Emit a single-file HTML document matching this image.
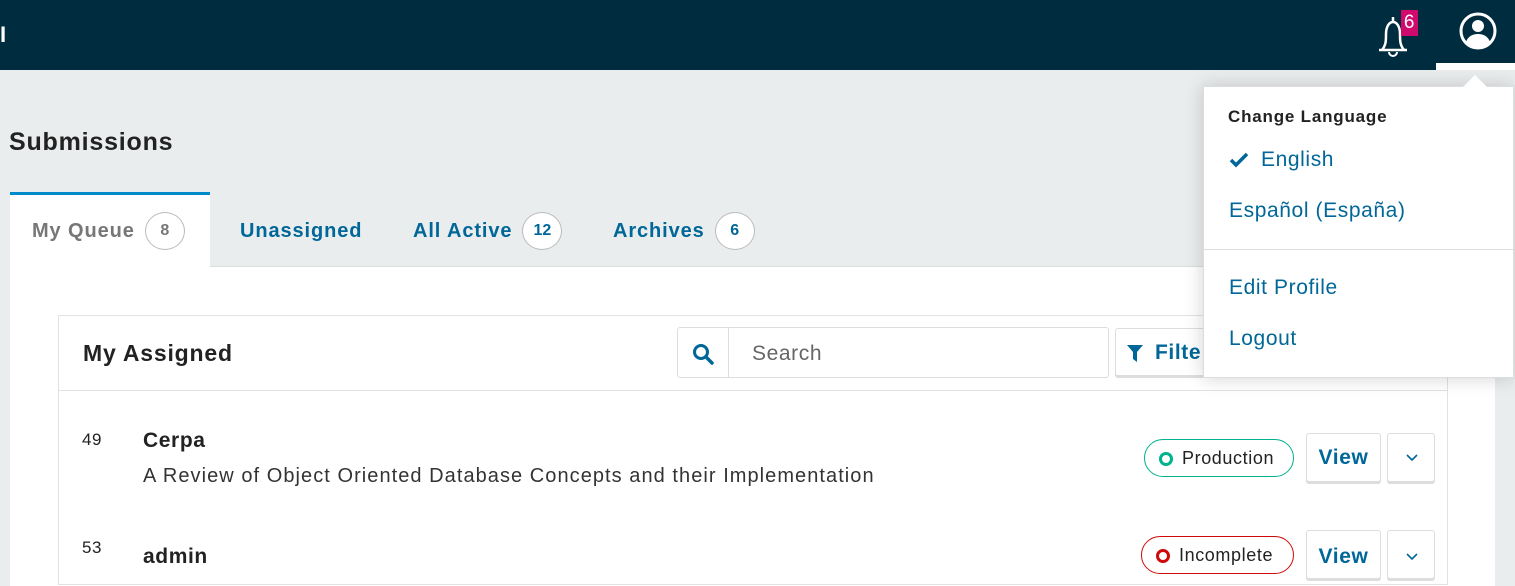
<!DOCTYPE html>
<html><head><meta charset="utf-8"><style>
*{box-sizing:border-box;margin:0;padding:0}
body{width:1515px;height:575px;overflow:hidden;background:#eaedee;font-family:"Liberation Sans",sans-serif;position:relative;color:#222;letter-spacing:0.6px}
.top{position:absolute;left:0;top:0;width:1515px;height:70px;background:#002c40}
.abs{position:absolute}
.tab{position:absolute;top:211px;height:40px;display:flex;align-items:center;font-size:20px;font-weight:bold;color:#006798;letter-spacing:0.9px}
.badge{display:inline-block;width:40px;height:38px;border:1px solid #bbb;border-radius:50%;text-align:center;line-height:36px;font-size:16px;margin-left:10px;background:#fff;letter-spacing:0}
.btn{position:absolute;background:#fff;border:1px solid #ddd;border-radius:3px;box-shadow:0 2px 0 #ddd}
.pill{position:absolute;height:38px;border-radius:19px;background:#fff;font-size:18px;line-height:36px;padding-left:37px;color:#222}
.pill i{position:absolute;left:14px;top:12px;width:14px;height:14px;border-radius:50%;border:3px solid}
.dd a{position:absolute;left:26px;font-size:21px;color:#006798}
</style></head><body>
<div class="top"></div>
<div class="abs" style="left:0;top:22px;color:#fff;font-weight:bold;font-size:22px">I</div>
<svg class="abs" style="left:1374px;top:13px" width="42" height="46" viewBox="0 0 42 46"><path d="M19 4v5M5 37h28M8 37c4-5 4-9 4-16 0-7 3-12 7-12s7 5 7 12c0 7 0 11 4 16" fill="none" stroke="#fff" stroke-width="2.5"/><path d="M15 39a4 4 0 0 0 8 0" fill="none" stroke="#fff" stroke-width="2"/></svg>
<div class="abs" style="left:1401px;top:10px;width:17px;height:26px;background:#d00a6c;color:#fff;font-size:19px;text-align:center;line-height:26px">6</div>
<svg class="abs" style="left:1458px;top:11px" width="40" height="40" viewBox="0 0 40 40"><circle cx="20" cy="20" r="17" fill="none" stroke="#fff" stroke-width="3"/><circle cx="20" cy="15" r="6" fill="#fff"/><path d="M8 31c2-6 7-8 12-8s10 2 12 8c-3 3-7 5-12 5s-9-2-12-5z" fill="#fff"/></svg>
<div class="abs" style="left:1436px;top:63px;width:79px;height:7px;background:#fff"></div>
<div class="abs" style="left:9px;top:128px;font-size:25px;font-weight:bold;color:#222;letter-spacing:0.8px">Submissions</div>
<div class="abs" style="left:10px;top:266px;width:1485px;height:320px;background:#fff"></div>
<div class="abs" style="left:10px;top:266px;width:1485px;height:1px;background:#ddd"></div>
<div class="abs" style="left:10px;top:192px;width:200px;height:76px;background:#fff;border-top:3px solid #008acb"></div>
<div class="tab" style="left:32px;color:#777">My Queue<span class="badge">8</span></div>
<div class="tab" style="left:240px">Unassigned</div>
<div class="tab" style="left:413px">All Active<span class="badge">12</span></div>
<div class="tab" style="left:613px">Archives<span class="badge">6</span></div>
<div class="abs" style="left:58px;top:315px;width:1390px;height:270px;background:#fff;border:1px solid #e2e2e2"></div>
<div class="abs" style="left:58px;top:390px;width:1390px;height:1px;background:#e2e2e2"></div>
<div class="abs" style="left:83px;top:340px;font-size:23px;font-weight:bold;color:#222;letter-spacing:0.8px">My Assigned</div>
<div class="abs" style="left:677px;top:327px;width:432px;height:51px;border:1px solid #ddd;border-radius:3px;background:#fff"></div>
<div class="abs" style="left:728px;top:328px;width:1px;height:49px;background:#ddd"></div>
<svg class="abs" style="left:692px;top:343px" width="22" height="22" viewBox="0 0 22 22"><circle cx="9" cy="9" r="6.5" fill="none" stroke="#006798" stroke-width="3"/><path d="M14 14l6 6" stroke="#006798" stroke-width="3.5" stroke-linecap="round"/></svg>
<div class="abs" style="left:752px;top:342px;font-size:21px;color:#666">Search</div>
<div class="btn" style="left:1115px;top:328px;width:110px;height:48px"></div>
<svg class="abs" style="left:1127px;top:345px" width="16" height="17" viewBox="0 0 16 17"><path d="M0 0h16l-6 7v10l-4-3V7z" fill="#006798"/></svg>
<div class="abs" style="left:1155px;top:341px;font-size:21px;font-weight:bold;color:#006798">Filte</div>
<div class="btn" style="left:1238px;top:328px;width:197px;height:48px"></div>
<div class="abs" style="left:82px;top:430px;font-size:17px">49</div>
<div class="abs" style="left:143px;top:429px;font-size:21px;font-weight:bold">Cerpa</div>
<div class="abs" style="left:143px;top:465px;font-size:20px;color:#333;letter-spacing:1.05px">A Review of Object Oriented Database Concepts and their Implementation</div>
<div class="pill" style="left:1144px;top:439px;width:150px;border:1px solid #00b28d"><i style="border-color:#00b28d"></i>Production</div>
<div class="btn" style="left:1306px;top:433px;width:75px;height:49px;text-align:center;line-height:48px;font-size:21px;font-weight:bold;color:#006798">View</div>
<div class="btn" style="left:1387px;top:433px;width:48px;height:49px"><svg style="position:absolute;left:18px;top:20px" width="12" height="8" viewBox="0 0 12 8"><path d="M1 1l5 5 5-5" fill="none" stroke="#006798" stroke-width="1.6"/></svg></div>
<div class="abs" style="left:82px;top:538px;font-size:17px">53</div>
<div class="abs" style="left:143px;top:545px;font-size:21px;font-weight:bold">admin</div>
<div class="pill" style="left:1141px;top:536px;width:153px;border:1px solid #d00a0a"><i style="border-color:#d00a0a"></i>Incomplete</div>
<div class="btn" style="left:1306px;top:530px;width:75px;height:49px;text-align:center;line-height:52px;font-size:21px;font-weight:bold;color:#006798">View</div>
<div class="btn" style="left:1387px;top:530px;width:48px;height:49px"><svg style="position:absolute;left:18px;top:22px" width="12" height="8" viewBox="0 0 12 8"><path d="M1 1l5 5 5-5" fill="none" stroke="#006798" stroke-width="1.6"/></svg></div>
<div class="abs" style="left:1203px;top:86px;width:311px;height:292px;background:#fff;border:1px solid #ddd;box-shadow:0 0 18px rgba(0,0,0,.18)"></div>
<div class="abs" style="left:1463px;top:75px;width:0;height:0;border-left:12px solid transparent;border-right:12px solid transparent;border-bottom:12px solid #fff"></div>
<div class="dd abs" style="left:1203px;top:86px;width:311px;height:292px">
<div class="abs" style="left:25px;top:21px;font-size:17px;font-weight:bold;color:#222;letter-spacing:0.8px">Change Language</div>
<svg class="abs" style="left:26px;top:66px" width="20" height="16" viewBox="0 0 20 16"><path d="M2 8l5 5L18 2" fill="none" stroke="#006798" stroke-width="3.5"/></svg>
<a style="left:58px;top:62px">English</a>
<a style="top:113px">Español (España)</a>
<div class="abs" style="left:0;top:163px;width:311px;height:1px;background:#ddd"></div>
<a style="top:190px">Edit Profile</a>
<a style="top:241px">Logout</a>
</div>
</body></html>
